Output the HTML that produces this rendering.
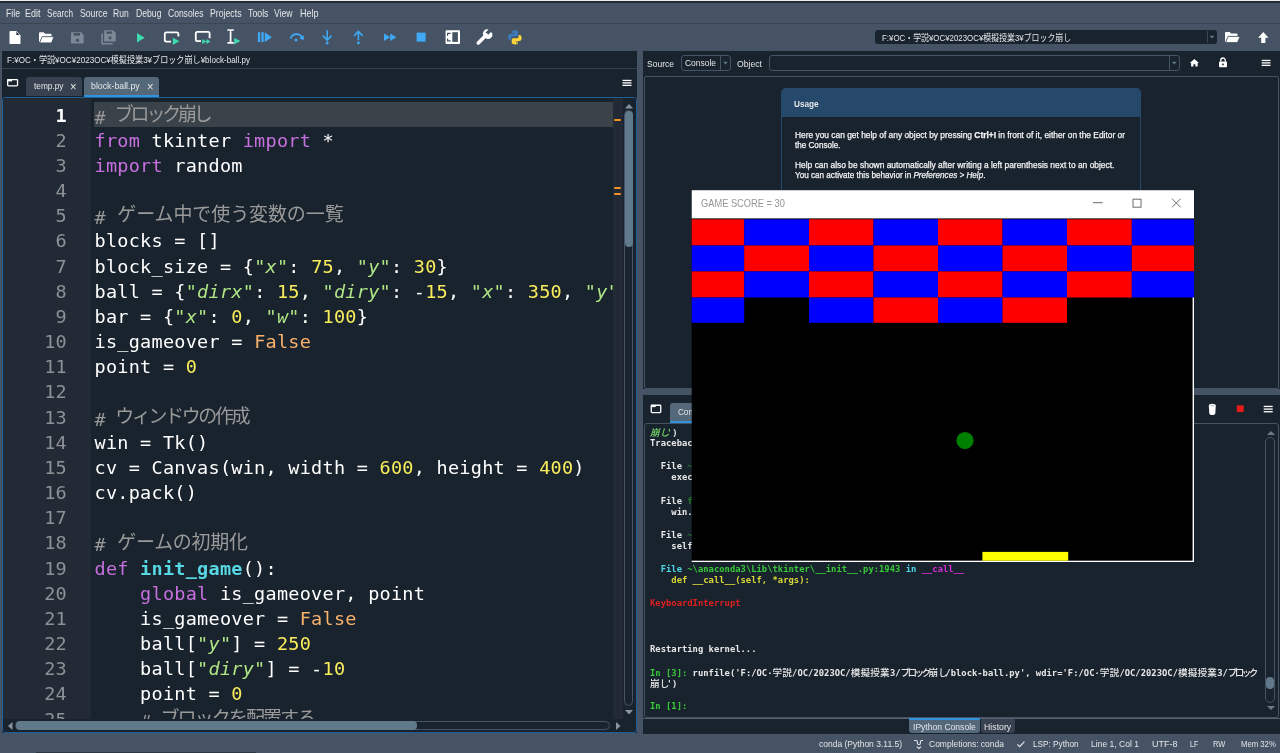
<!DOCTYPE html>
<html lang="ja">
<head>
<meta charset="utf-8">
<title>Spyder</title>
<style>
*{box-sizing:border-box;margin:0;padding:0}
html,body{width:1280px;height:753px;overflow:hidden;background:#19232d}
body{will-change:transform;position:relative;font-family:"Liberation Sans","Noto Sans CJK JP",sans-serif;color:#e0e1e3;font-size:10px}
.abs{position:absolute}
.ui{position:absolute;white-space:nowrap;transform-origin:0 50%;color:#e4e6e8}
/* ---------- top chrome ---------- */
#topline{left:0;top:0;width:1280px;height:2.5px;background:#222b37;border-top:1px solid #e9ebed}
#menubar{left:0;top:2.5px;width:1280px;height:20.5px;background:#455364}
#menusep{left:0;top:23px;width:1280px;height:1px;background:#3a4654}
#toolbar{left:0;top:24px;width:1280px;height:27px;background:#455364}
svg{position:absolute;overflow:visible}
/* ---------- left pane ---------- */
#leftedge{left:0;top:51px;width:2px;height:702px;background:#455364}
#pathbar{left:2px;top:51px;width:635px;height:17px;background:#19232d}
#pathsep{left:2px;top:68px;width:635px;height:1px;background:#36414e}
#tabbar{left:2px;top:69px;width:635px;height:28px;background:#19232d}
.tab{position:absolute;border-radius:3px 3px 0 0}
#editor{left:2px;top:97px;width:635px;height:636px;border:1px solid #1d5f98;border-radius:3px;background:#19232d;overflow:hidden}
#gutter{left:0;top:0;width:88px;height:622px;background:#222b35}
#flagcol{left:609.5px;top:0;width:10px;height:621px;background:#222b35}
#curline{left:2.5px;top:4px;width:520px;height:25px;background:#3a424a}
.ln{position:absolute;left:0;width:64px;text-align:right;color:#8e9297;letter-spacing:.263px;font:18.5px/25.15px "DejaVu Sans Mono","Liberation Mono","Noto Sans CJK JP",monospace;height:25.15px;white-space:pre}
.cl{position:absolute;left:3.5px;color:#fff;letter-spacing:.263px;font:18.5px/25.15px "DejaVu Sans Mono","Liberation Mono","Noto Sans CJK JP",monospace;height:25.15px;white-space:pre}
.c{color:#9a9a9a}.k{color:#c670e0}.s{color:#b0e686;font-style:italic}.n{color:#faed5c}.b{color:#fab16c}.d{color:#57d6e4;font-weight:bold}
.j{font-family:"Noto Sans CJK JP",sans-serif;font-size:19px;position:relative;top:-2.7px}
#code{left:88px;top:0;width:522px;height:621px;overflow:hidden}
#flagcol i{position:absolute;left:1px;width:7px;height:2px;background:#f39422;border-radius:1px}
#vsb{left:620px;top:0;width:13px;height:621px;background:#19232d}
#hsb{left:0;top:621px;width:633px;height:12px;background:#19232d}
#vsb b,#hsb b{background:#60798b;border-radius:4px}
#vsb u,#hsb u{border:1px solid #455364;border-radius:5px}
/* ---------- splitters ---------- */
#vsplit{left:637px;top:51px;width:6px;height:683px;background:#455364}
#hsplit{left:643px;top:389px;width:637px;height:6px;background:#455364}
/* ---------- help pane ---------- */
#helpbar{left:643px;top:51px;width:637px;height:25px;background:#19232d}
.combo{position:absolute;border:1px solid #455364;border-radius:3px;background:#19232d}
#helpview{left:644px;top:76px;width:635px;height:313px;border:1px solid #455364;border-radius:2px;background:#19232d}
#usage{left:781px;top:88px;width:360px;height:200px;border:1px solid #26486b;border-radius:4px;background:#19232d;overflow:hidden}
#usagehd{left:0;top:0;width:360px;height:28px;background:#26486b}
.ht{position:absolute;left:12px;white-space:nowrap;font-size:8.3px;color:#f4f5f6;transform-origin:0 50%;-webkit-text-stroke:.25px #f4f5f6}
/* ---------- console pane ---------- */
#conbar{left:643px;top:395px;width:637px;height:28px;background:#19232d}
#conview{left:644px;top:423px;width:635px;height:294.6px;border:1px solid #455364;border-radius:3px;background:#19232d;overflow:hidden}
.co{position:absolute;left:5px;white-space:pre;letter-spacing:.03px;font:bold 8.8px/11.4px "DejaVu Sans Mono","Liberation Mono","Noto Sans CJK JP",monospace;color:#e8e8e8;height:11.4px}
.kj,.kn{font-family:"Noto Sans CJK JP",sans-serif;font-size:9.6px;font-weight:500}.kj{letter-spacing:.2px}.kn{letter-spacing:-2.6px}
.cg{color:#38c838}.cd{color:#237a2c}.cc{color:#4fd8e8}.cm{color:#d42fd4}.cy{color:#d8d838}.cr{color:#e01f1f}.cgi{color:#74d36a;font-style:italic}
#bottabs{left:643px;top:719px;width:637px;height:15px;background:#19232d}
/* ---------- status bar ---------- */
#status{left:0;top:734px;width:1280px;height:19px;background:#455364}
#leftbot{left:0;top:733px;width:643px;height:1px;background:#455364}
/* ---------- game window ---------- */
#game{left:691px;top:190px;width:503px;height:372px;overflow:hidden}
</style>
</head>
<body>
<div id="topline" class="abs"></div>
<div id="menubar" class="abs"></div>
<div id="menusep" class="abs"></div>
<div id="toolbar" class="abs"></div>
<div id="leftedge" class="abs"></div>
<div id="pathbar" class="abs"></div>
<div id="pathsep" class="abs"></div>
<div id="tabbar" class="abs"></div>
<div id="editor" class="abs">
<div id="gutter" class="abs">
<div class="ln" style="top:4.50px;color:#fff;font-weight:bold">1</div>
<div class="ln" style="top:29.67px">2</div>
<div class="ln" style="top:54.84px">3</div>
<div class="ln" style="top:80.01px">4</div>
<div class="ln" style="top:105.18px">5</div>
<div class="ln" style="top:130.35px">6</div>
<div class="ln" style="top:155.52px">7</div>
<div class="ln" style="top:180.69px">8</div>
<div class="ln" style="top:205.86px">9</div>
<div class="ln" style="top:231.03px">10</div>
<div class="ln" style="top:256.20px">11</div>
<div class="ln" style="top:281.37px">12</div>
<div class="ln" style="top:306.54px">13</div>
<div class="ln" style="top:331.71px">14</div>
<div class="ln" style="top:356.88px">15</div>
<div class="ln" style="top:382.05px">16</div>
<div class="ln" style="top:407.22px">17</div>
<div class="ln" style="top:432.39px">18</div>
<div class="ln" style="top:457.56px">19</div>
<div class="ln" style="top:482.73px">20</div>
<div class="ln" style="top:507.90px">21</div>
<div class="ln" style="top:533.07px">22</div>
<div class="ln" style="top:558.24px">23</div>
<div class="ln" style="top:583.41px">24</div>
<div class="ln" style="top:608.58px">25</div>
</div>
<div id="code" class="abs">
<div id="curline" class="abs"></div>
<div class="cl" style="top:4.50px"><span class="c"># <span class="j" style="letter-spacing:-3.2px;margin-left:-2.5px">ブロック崩し</span></span></div>
<div class="cl" style="top:29.67px"><span class="k">from</span> tkinter <span class="k">import</span> *</div>
<div class="cl" style="top:54.84px"><span class="k">import</span> random</div>
<div class="cl" style="top:80.01px"></div>
<div class="cl" style="top:105.18px"><span class="c"># <span class="j" style="letter-spacing:-0.1px">ゲーム中で使う変数の一覧</span></span></div>
<div class="cl" style="top:130.35px">blocks = []</div>
<div class="cl" style="top:155.52px">block_size = {<span class="s">"x"</span>: <span class="n">75</span>, <span class="s">"y"</span>: <span class="n">30</span>}</div>
<div class="cl" style="top:180.69px">ball = {<span class="s">"dirx"</span>: <span class="n">15</span>, <span class="s">"diry"</span>: -<span class="n">15</span>, <span class="s">"x"</span>: <span class="n">350</span>, <span class="s">"y"</span>: <span class="n">250</span>, <span class="s">"w"</span>: <span class="n">10</span>}</div>
<div class="cl" style="top:205.86px">bar = {<span class="s">"x"</span>: <span class="n">0</span>, <span class="s">"w"</span>: <span class="n">100</span>}</div>
<div class="cl" style="top:231.03px">is_gameover = <span class="b">False</span></div>
<div class="cl" style="top:256.20px">point = <span class="n">0</span></div>
<div class="cl" style="top:281.37px"></div>
<div class="cl" style="top:306.54px"><span class="c"># <span class="j" style="letter-spacing:-2.4px;margin-left:-2px">ウィンドウの作成</span></span></div>
<div class="cl" style="top:331.71px">win = Tk()</div>
<div class="cl" style="top:356.88px">cv = Canvas(win, width = <span class="n">600</span>, height = <span class="n">400</span>)</div>
<div class="cl" style="top:382.05px">cv.pack()</div>
<div class="cl" style="top:407.22px"></div>
<div class="cl" style="top:432.39px"><span class="c"># <span class="j" style="letter-spacing:-0.3px">ゲームの初期化</span></span></div>
<div class="cl" style="top:457.56px"><span class="k">def</span> <span class="d">init_game</span>():</div>
<div class="cl" style="top:482.73px">    <span class="k">global</span> is_gameover, point</div>
<div class="cl" style="top:507.90px">    is_gameover = <span class="b">False</span></div>
<div class="cl" style="top:533.07px">    ball[<span class="s">"y"</span>] = <span class="n">250</span></div>
<div class="cl" style="top:558.24px">    ball[<span class="s">"diry"</span>] = -<span class="n">10</span></div>
<div class="cl" style="top:583.41px">    point = <span class="n">0</span></div>
<div class="cl" style="top:608.58px">    <span class="c"># <span class="j" style="letter-spacing:-1.9px;margin-left:-2.5px">ブロックを配置する</span></span></div>
</div>
<div id="flagcol" class="abs"><i style="top:21px"></i><i style="top:89px"></i><i style="top:95px"></i></div>
<div id="vsb" class="abs"><svg width="8" height="4.5" style="left:2px;top:6px" viewBox="0 0 8 4.5"><path d="M0 4.5L4 0L8 4.5Z" fill="#8794a1"/></svg><u class="abs" style="left:.8px;top:12px;width:9.5px;height:596px"></u><b class="abs" style="left:1.5px;top:12.5px;width:8.5px;height:136px"></b><svg width="8" height="4.5" style="left:2px;top:611.5px" viewBox="0 0 8 4.5"><path d="M0 0L4 4.5L8 0Z" fill="#8794a1"/></svg></div>
<div id="hsb" class="abs"><svg width="4.5" height="8" style="left:5px;top:2.5px" viewBox="0 0 4.5 8"><path d="M4.5 0L0 4L4.5 8Z" fill="#8794a1"/></svg><u class="abs" style="left:11.5px;top:1.800px;width:595px;height:9.5px"></u><b class="abs" style="left:13px;top:2.300px;width:401px;height:8.5px"></b><svg width="4.5" height="8" style="left:612.5px;top:2.5px" viewBox="0 0 4.5 8"><path d="M0 0L4.5 4L0 8Z" fill="#8794a1"/></svg></div>
</div>
<div id="leftbot" class="abs"></div>
<div class="abs" style="left:36px;top:752px;width:220px;height:1px;background:#2c3643;z-index:3"></div>
<div id="vsplit" class="abs"></div>
<div id="helpbar" class="abs"></div>
<div id="helpview" class="abs"></div>
<div id="usage" class="abs"><div id="usagehd" class="abs"></div>
<span class="ht" style="left:12.5px;top:40.5px;font-size:8.6px;line-height:11px;transform:scaleX(0.975)">Here you can get help of any object by pressing <b>Ctrl+I</b> in front of it, either on the Editor or</span>
<span class="ht" style="left:12.5px;top:50.8px;font-size:8.6px;line-height:11px;transform:scaleX(0.943)">the Console.</span>
<span class="ht" style="left:12.5px;top:71.3px;font-size:8.6px;line-height:11px;transform:scaleX(0.979)">Help can also be shown automatically after writing a left parenthesis next to an object.</span>
<span class="ht" style="left:12.5px;top:80.9px;font-size:8.6px;line-height:11px;transform:scaleX(0.945)">You can activate this behavior in <i>Preferences &gt; Help</i>.</span>
</div>
<div id="hsplit" class="abs"></div>
<div id="conbar" class="abs"></div>
<div id="conview" class="abs">
<div class="co" style="top:2.7px"><span class="cgi"><span class="kj">崩</span><span class="kn">し</span>'</span>)</div>
<div class="co" style="top:14.1px">Traceback (most recent call last):</div>
<div class="co" style="top:37.0px">  File <span class="cd">~\anaconda3\Lib\site-packages\spyder_kernels\py3compat.py:356</span> in <span class="cd">compat_exec</span></div>
<div class="co" style="top:48.4px">    exec(code, globals, locals)</div>
<div class="co" style="top:71.2px">  File <span class="cd">f:\oc·<span class="kj">学説</span>\oc\2023oc\<span class="kj">模擬授業</span>3\<span class="kn">ブロック</span><span class="kj">崩</span><span class="kn">し</span>\block-ball.py:91</span></div>
<div class="co" style="top:82.6px">    win.mainloop()</div>
<div class="co" style="top:105.5px">  File <span class="cd">~\anaconda3\Lib\tkinter\__init__.py:1485</span> in <span class="cd">mainloop</span></div>
<div class="co" style="top:116.9px">    self.tk.mainloop(n)</div>
<div class="co" style="top:139.7px">  <span class="cc">File</span> <span class="cg">~\anaconda3\Lib\tkinter\__init__.py:1943</span> <span class="cc">in</span> <span class="cm">__call__</span></div>
<div class="co" style="top:151.2px"><span class="cy">    def __call__(self, *args):</span></div>
<div class="co" style="top:174.0px"><span class="cr">KeyboardInterrupt</span></div>
<div class="co" style="top:219.7px">Restarting kernel...</div>
<div class="co" style="top:242.5px"><span class="cg">In [3]:</span> runfile('F:/OC·<span class="kj">学説</span>/OC/2023OC/<span class="kj">模擬授業</span>3/<span class="kn">ブロック</span><span class="kj">崩</span><span class="kn">し</span>/block-ball.py', wdir='F:/OC·<span class="kj">学説</span>/OC/2023OC/<span class="kj">模擬授業</span>3/<span class="kn">ブロック</span></div>
<div class="co" style="top:253.9px"><span class="kj">崩</span><span class="kn">し</span>')</div>
<div class="co" style="top:276.8px"><span class="cg">In [1]:</span> </div>
<svg width="8" height="4" style="left:621.5px;top:7px" viewBox="0 0 8 4"><path d="M0 4L4 0L8 4Z" fill="#6d7b89"/></svg>
<div class="abs" style="left:620px;top:13px;width:10px;height:266px;border:1px solid #455364;border-radius:5px"></div>
<div class="abs" style="left:621px;top:253px;width:8px;height:12px;background:#60798b;border-radius:4px"></div>
<svg width="8" height="4" style="left:621.5px;top:282px" viewBox="0 0 8 4"><path d="M0 0L4 4L8 0Z" fill="#6d7b89"/></svg>
</div>
<div id="bottabs" class="abs"></div>
<div class="abs" style="left:643px;top:718px;width:637px;height:1px;background:#56616e"></div>
<div id="status" class="abs"></div>
<div class="abs" style="left:875px;top:30px;width:342px;height:14px;background:#19232d;border-radius:3px"></div>
<div class="abs" style="left:1207px;top:31px;width:1px;height:12px;background:#3a4654"></div>
<div class="tab" style="left:26px;top:77px;width:56px;height:19px;background:#37414f"></div>
<div class="tab" style="left:84px;top:77px;width:75px;height:20px;background:#54687a;border-bottom:2.5px solid #2f94dc"></div>
<div class="combo" style="left:681px;top:55px;width:50px;height:16px"></div>
<div class="abs" style="left:720px;top:56px;width:1px;height:14px;background:#455364"></div>
<div class="combo" style="left:769px;top:55px;width:411px;height:16px"></div>
<div class="abs" style="left:1169px;top:56px;width:1px;height:14px;background:#455364"></div>
<div class="tab" style="left:670px;top:403px;width:66px;height:20px;background:#54687a;border-bottom:2.5px solid #2f94dc"></div>
<div class="tab" style="left:909px;top:718px;width:71px;height:15px;background:#54687a;border-top:2px solid #2f94dc;border-radius:0 0 3px 3px"></div>
<div class="tab" style="left:981px;top:719px;width:34px;height:14px;background:#37414f;border-radius:0 0 3px 3px"></div>
<svg id="icons" width="1280" height="753" viewBox="0 0 1280 753" style="left:0;top:0">
<path d="M10.4 31h5.9l4.2 4.2v8a.9.9 0 0 1-.9.9h-9.2a.9.9 0 0 1-.9-.9v-11.300a.9.9 0 0 1 .9-.9z" fill="#fff"/><path d="M16.3 31.800v3.300h3.300z" fill="#2b3542"/>
<path d="M39.0 33.3a1 1 0 0 1 1-1h3.6l1.5 1.5h5.4a1 1 0 0 1 1 1v6.5a1 1 0 0 1-1 1h-10.5a1 1 0 0 1-1-1z" fill="#fff"/><path d="M42.1 36.7h12l-2.6 6.2h-12z" fill="#fff" stroke="#455364" stroke-width=".9" stroke-linejoin="round"/>
<path d="M71.8 32.200h9.200l2.7 2.700v7.900a.8.8 0 0 1-.8.8h-11.100a.8.8 0 0 1-.8-.8v-9.800a.8.8 0 0 1 .8-.8z" fill="#7d8996"/><rect x="73.6" y="33" width="6.4" height="2.6" fill="#455364"/><circle cx="77.5" cy="40.2" r="1.7" fill="#455364"/>
<path d="M104.9 30.200h8.200l2.7 2.700v8a.7.7 0 0 1-.7.700h-10.200a.7.7 0 0 1-.7-.7v-10a.7.7 0 0 1 .7-.7z" fill="#7d8996"/><rect x="106.5" y="31.5" width="5.6" height="2.3" fill="#455364"/><circle cx="110" cy="37.8" r="1.6" fill="#455364"/><path d="M101.3 33.500h1.600v9.600h9.800v1.500h-10.600a.8.8 0 0 1-.8-.8z" fill="#7d8996"/>
<path d="M137 33l7.7 4.800-7.7 4.800z" fill="#3fd9ac"/>
<path d="M171 41.600h-4.600a1.6 1.6 0 0 1-1.600-1.600v-6a1.6 1.6 0 0 1 1.600-1.600h10.400a1.6 1.6 0 0 1 1.6 1.600v2.6" fill="none" stroke="#fff" stroke-width="1.8"/><path d="M172.8 37.600l6.6 3.600-6.6 3.700z" fill="#3fd9ac"/>
<path d="M201 41.100h-3.600a1.6 1.6 0 0 1-1.600-1.600v-6a1.6 1.6 0 0 1 1.600-1.600h10.600a1.6 1.6 0 0 1 1.6 1.600v4.7" fill="none" stroke="#fff" stroke-width="1.8"/><path d="M202.2 39l4.2 2.500-4.2 2.600zM206.4 39l4.2 2.500-4.2 2.600z" fill="#3fd9ac"/>
<path d="M227.4 30h2.200l1 .6 1-.6h2.200M227.4 42.800h2.200l1-.6 1 .6h2.200M230.6 30.500v11.8" fill="none" stroke="#fff" stroke-width="1.7"/><path d="M234.2 37.700l6.2 3.300-6.2 3.400z" fill="#3fd9ac"/>
<path d="M257.9 32.300h2.300v9.700h-2.300zM261.4 32.300h2.300v9.700h-2.300zM264.8 32.300l7.1 4.850-7.1 4.850z" fill="#3fa9f5"/>
<path d="M290.5 38.800a6.3 6.3 0 0 1 11.600-1.4" fill="none" stroke="#3fa9f5" stroke-width="1.7"/><path d="M304 35.300l-.3 4.600-4.400-1.300z" fill="#3fa9f5"/><circle cx="296" cy="40" r="1.5" fill="#3fa9f5"/>
<path d="M327.2 30.300v9.500M322.9 35.600l4.3 4.6 4.300-4.6" fill="none" stroke="#3fa9f5" stroke-width="1.6"/><circle cx="327.2" cy="43" r="1.4" fill="#3fa9f5"/>
<path d="M358.4 40.300v-8.600M354.1 35.900l4.300-4.6 4.3 4.6" fill="none" stroke="#3fa9f5" stroke-width="1.6"/><circle cx="358.4" cy="43" r="1.4" fill="#3fa9f5"/>
<path d="M384 33.400l6.2 3.750-6.2 3.750zM390.2 33.400l6.2 3.750-6.2 3.750z" fill="#3fa9f5"/>
<rect x="416.6" y="32.6" width="9" height="9" fill="#3fa9f5"/>
<rect x="445.6" y="30.3" width="14.4" height="13.8" rx="1.2" fill="#fff"/><rect x="452.3" y="32.2" width="5.6" height="9.7" fill="#455364"/><path d="M450.7 33.3h-3.100v2.500M450.7 40.900h-3.100v-2.500" fill="none" stroke="#455364" stroke-width="1.200"/>
<path d="M478.3 42.900l8-8" stroke="#fff" stroke-width="3.6" stroke-linecap="round" fill="none"/><path d="M490.9 31.400l-2.9 2.900-1.900-.5-.5-1.9 2.900-2.900a4.3 4.3 0 0 0-5.3 5.700l1.9 1.9 1.5 1.500a4.3 4.3 0 0 0 5.700-5.300z" fill="#fff" transform="translate(0 .6)"/>
<g transform="translate(507.3 29.900) scale(.94)"><path d="M7.900.5c-3.2 0-3 1.400-3 1.400v1.900h3.100v.5H3.100S.8 4 .8 7.400s2 3.3 2 3.300h1.200V9.100s-.1-2 2-2h3.400s1.9 0 1.900-1.900V2.400S11.600.5 7.900.5zM6.2 1.600a.6.6 0 1 1 0 1.200.6.6 0 0 1 0-1.200z" fill="#3b7bbd"/><path d="M8.1 15.500c3.2 0 3-1.4 3-1.400v-1.900H8v-.5h4.900s2.300.3 2.300-3.100-2-3.300-2-3.300H12v1.600s.1 2-2 2H6.600s-1.9 0-1.9 1.900v3s-.3 1.7 3.4 1.700zm1.700-1.100a.6.6 0 1 1 0-1.200.6.6 0 0 1 0 1.200z" fill="#ffd43b"/></g>
<path d="M1209.6 35.800h4.800l-2.4 2.800z" fill="#60798b"/>
<path d="M1225.0 33.0a1 1 0 0 1 1-1h3.6l1.5 1.5h5.4a1 1 0 0 1 1 1v6.5a1 1 0 0 1-1 1h-10.5a1 1 0 0 1-1-1z" fill="#fff"/><path d="M1228.1 36.4h12l-2.6 6.2h-12z" fill="#fff" stroke="#455364" stroke-width=".9" stroke-linejoin="round"/>
<path d="M1263.3 32.100l5.2 5.600h-3.100v5.300h-4.200v-5.300h-3.100z" fill="#fff"/>
<path d="M8.45 79.55h8.30a0.8 0.8 0 0 1 0.8 0.8v4.70a0.8 0.8 0 0 1-0.8 0.8h-8.30a0.8 0.8 0 0 1-0.8-0.8v-4.70a0.8 0.8 0 0 1 0.8-0.8z" fill="none" stroke="#fff" stroke-width="1.3"/><path d="M7.30 79.20h4.800v2.200h-4.800z" fill="#fff"/>
<rect x="622.5" y="79.80" width="9.0" height="1.3" fill="#fff"/><rect x="622.5" y="82.25" width="9.0" height="1.3" fill="#fff"/><rect x="622.5" y="84.70" width="9.0" height="1.3" fill="#fff"/>
<path d="M723.2 61.800h4.600l-2.3 2.700z" fill="#60798b"/><path d="M1172 61.800h4.600l-2.3 2.700z" fill="#60798b"/>
<path d="M1194.4 58.900l4.6 4.100h-1.300v3.500h-2.300v-2.300h-2v2.300h-2.300v-3.500h-1.300z" fill="#fff"/>
<path d="M1220.8 61.500v-1.300a2.2 2.2 0 0 1 4.4 0v1.3" fill="none" stroke="#fff" stroke-width="1.3"/><rect x="1219" y="61.4" width="8" height="5.9" rx=".8" fill="#fff"/><rect x="1222.2" y="63.6" width="1.6" height="1.6" fill="#19232d"/>
<rect x="1261.7" y="59.80" width="8.8" height="1.3" fill="#fff"/><rect x="1261.7" y="62.25" width="8.8" height="1.3" fill="#fff"/><rect x="1261.7" y="64.70" width="8.8" height="1.3" fill="#fff"/>
<path d="M652.05 405.25h7.90a0.8 0.8 0 0 1 0.8 0.8v5.70a0.8 0.8 0 0 1-0.8 0.8h-7.90a0.8 0.8 0 0 1-0.8-0.8v-5.70a0.8 0.8 0 0 1 0.8-0.8z" fill="none" stroke="#fff" stroke-width="1.3"/><path d="M650.90 404.90h4.800v2.200h-4.800z" fill="#fff"/>
<path d="M1208.8 405.600c0-1.1 1.500-1.8 3.500-1.800s3.500.7 3.5 1.800l-.5 7.800c0 .9-1.3 1.500-3 1.500s-3-.6-3-1.500z" fill="#fff"/><ellipse cx="1212.3" cy="405.6" rx="2.6" ry=".9" fill="#c9ced3"/>
<rect x="1236.8" y="405.3" width="6.9" height="6.8" fill="#e31b1b"/>
<rect x="1263.7" y="405.80" width="9.0" height="1.3" fill="#fff"/><rect x="1263.7" y="408.45" width="9.0" height="1.3" fill="#fff"/><rect x="1263.7" y="411.10" width="9.0" height="1.3" fill="#fff"/>
<path d="M914 740.500h2.200a1.2 1.2 0 0 1 1.2 1.200v1.600a1.2 1.2 0 0 0 1.2 1.200h.6a1.2 1.2 0 0 0 1.200-1.200v-1.600a1.2 1.2 0 0 1 1.200-1.200h1.4" fill="none" stroke="#e4e6e8" stroke-width="1.1"/><path d="M916.7 746.600l2.2 1.9 2.200-1.9" fill="none" stroke="#e4e6e8" stroke-width="1.1"/>
<path d="M1017.4 744.4l2.300 2.300 4.700-5.100" fill="none" stroke="#e4e6e8" stroke-width="1.2"/>
</svg>
<span class="ui" style="left:5.5px;top:6.6px;font-size:10.2px;line-height:14.3px;transform:scaleX(0.853)">File</span>
<span class="ui" style="left:25.0px;top:6.6px;font-size:10.2px;line-height:14.3px;transform:scaleX(0.883)">Edit</span>
<span class="ui" style="left:47.0px;top:6.6px;font-size:10.2px;line-height:14.3px;transform:scaleX(0.805)">Search</span>
<span class="ui" style="left:79.5px;top:6.6px;font-size:10.2px;line-height:14.3px;transform:scaleX(0.852)">Source</span>
<span class="ui" style="left:113.0px;top:6.6px;font-size:10.2px;line-height:14.3px;transform:scaleX(0.842)">Run</span>
<span class="ui" style="left:135.5px;top:6.6px;font-size:10.2px;line-height:14.3px;transform:scaleX(0.849)">Debug</span>
<span class="ui" style="left:167.5px;top:6.6px;font-size:10.2px;line-height:14.3px;transform:scaleX(0.836)">Consoles</span>
<span class="ui" style="left:209.5px;top:6.6px;font-size:10.2px;line-height:14.3px;transform:scaleX(0.856)">Projects</span>
<span class="ui" style="left:247.5px;top:6.6px;font-size:10.2px;line-height:14.3px;transform:scaleX(0.862)">Tools</span>
<span class="ui" style="left:274.0px;top:6.6px;font-size:10.2px;line-height:14.3px;transform:scaleX(0.845)">View</span>
<span class="ui" style="left:299.5px;top:6.6px;font-size:10.2px;line-height:14.3px;transform:scaleX(0.883)">Help</span>
<span class="ui" style="left:7.0px;top:53.4px;font-size:9.5px;line-height:13.3px;transform:scaleX(0.851)">F:¥OC・学説¥OC¥2023OC¥模擬授業3¥ブロック崩し¥block-ball.py</span>
<span class="ui" style="left:33.8px;top:78.9px;font-size:9.5px;line-height:13.3px;transform:scaleX(0.873)">temp.py</span>
<span class="ui" style="left:69.5px;top:79.3px;font-size:13px;line-height:15.4px;transform:scaleX(0.86)">×</span>
<span class="ui" style="left:91.2px;top:78.9px;font-size:9.5px;line-height:13.3px;transform:scaleX(0.923)">block-ball.py</span>
<span class="ui" style="left:146.5px;top:79.3px;font-size:13px;line-height:15.4px;transform:scaleX(0.86)">×</span>
<span class="ui" style="left:882.0px;top:30.8px;font-size:9.5px;line-height:13.3px;transform:scaleX(0.831)">F:¥OC・学説¥OC¥2023OC¥模擬授業3¥ブロック崩し</span>
<span class="ui" style="left:647.0px;top:56.9px;font-size:9.8px;line-height:13.7px;transform:scaleX(0.870)">Source</span>
<span class="ui" style="left:684.5px;top:55.9px;font-size:9.8px;line-height:13.7px;transform:scaleX(0.862)">Console</span>
<span class="ui" style="left:737.0px;top:56.9px;font-size:9.8px;line-height:13.7px;transform:scaleX(0.883)">Object</span>
<span class="ui" style="left:794.4px;top:96.9px;font-size:9.6px;line-height:13.4px;transform:scaleX(0.854);font-weight:bold">Usage</span>
<span class="ui" style="left:677.8px;top:405.1px;font-size:9.8px;line-height:13.7px;transform:scaleX(0.829)">Console 1/A</span>
<span class="ui" style="left:912.5px;top:719.6px;font-size:9.8px;line-height:13.7px;transform:scaleX(0.874)">IPython Console</span>
<span class="ui" style="left:983.8px;top:719.6px;font-size:9.8px;line-height:13.7px;transform:scaleX(0.894)">History</span>
<span class="ui" style="left:818.8px;top:737.1px;font-size:9.8px;line-height:13.7px;transform:scaleX(0.868)">conda (Python 3.11.5)</span>
<span class="ui" style="left:929.0px;top:737.1px;font-size:9.8px;line-height:13.7px;transform:scaleX(0.866)">Completions: conda</span>
<span class="ui" style="left:1032.5px;top:737.1px;font-size:9.8px;line-height:13.7px;transform:scaleX(0.839)">LSP: Python</span>
<span class="ui" style="left:1091.3px;top:737.1px;font-size:9.8px;line-height:13.7px;transform:scaleX(0.872)">Line 1, Col 1</span>
<span class="ui" style="left:1151.7px;top:737.1px;font-size:9.8px;line-height:13.7px;transform:scaleX(0.918)">UTF-8</span>
<span class="ui" style="left:1190.0px;top:737.1px;font-size:9.8px;line-height:13.7px;transform:scaleX(0.717)">LF</span>
<span class="ui" style="left:1212.5px;top:737.1px;font-size:9.8px;line-height:13.7px;transform:scaleX(0.761)">RW</span>
<span class="ui" style="left:1240.6px;top:737.1px;font-size:9.8px;line-height:13.7px;transform:scaleX(0.789)">Mem 32%</span>
<div id="game" class="abs">
<svg width="503" height="372" viewBox="0 0 503 372" style="left:0;top:0">
<rect x="0.7" y="0" width="502.3" height="372" fill="#000"/>
<rect x="0.7" y="0.2" width="502.3" height="28.200" fill="#fff"/>
<rect x="0.7" y="29.3" width="52.5" height="26.2" fill="#fe0000"/>
<rect x="53.2" y="29.3" width="64.8" height="26.2" fill="#0000fe"/>
<rect x="118.0" y="29.3" width="64.5" height="26.2" fill="#fe0000"/>
<rect x="182.5" y="29.3" width="64.5" height="26.2" fill="#0000fe"/>
<rect x="247.0" y="29.3" width="64.5" height="26.2" fill="#fe0000"/>
<rect x="311.5" y="29.3" width="64.5" height="26.2" fill="#0000fe"/>
<rect x="376.0" y="29.3" width="64.8" height="26.2" fill="#fe0000"/>
<rect x="440.8" y="29.3" width="62.2" height="26.2" fill="#0000fe"/>
<rect x="0.7" y="55.5" width="52.5" height="25.9" fill="#0000fe"/>
<rect x="53.2" y="55.5" width="64.8" height="25.9" fill="#fe0000"/>
<rect x="118.0" y="55.5" width="64.5" height="25.9" fill="#0000fe"/>
<rect x="182.5" y="55.5" width="64.5" height="25.9" fill="#fe0000"/>
<rect x="247.0" y="55.5" width="64.5" height="25.9" fill="#0000fe"/>
<rect x="311.5" y="55.5" width="64.5" height="25.9" fill="#fe0000"/>
<rect x="376.0" y="55.5" width="64.8" height="25.9" fill="#0000fe"/>
<rect x="440.8" y="55.5" width="62.2" height="25.9" fill="#fe0000"/>
<rect x="0.7" y="81.4" width="52.5" height="26.1" fill="#fe0000"/>
<rect x="53.2" y="81.4" width="64.8" height="26.1" fill="#0000fe"/>
<rect x="118.0" y="81.4" width="64.5" height="26.1" fill="#fe0000"/>
<rect x="182.5" y="81.4" width="64.5" height="26.1" fill="#0000fe"/>
<rect x="247.0" y="81.4" width="64.5" height="26.1" fill="#fe0000"/>
<rect x="311.5" y="81.4" width="64.5" height="26.1" fill="#0000fe"/>
<rect x="376.0" y="81.4" width="64.8" height="26.1" fill="#fe0000"/>
<rect x="440.8" y="81.4" width="62.2" height="26.1" fill="#0000fe"/>
<rect x="0.7" y="107.5" width="52.5" height="25.3" fill="#0000fe"/>
<rect x="118.0" y="107.5" width="64.5" height="25.3" fill="#0000fe"/>
<rect x="182.5" y="107.5" width="64.5" height="25.3" fill="#fe0000"/>
<rect x="247.0" y="107.5" width="64.5" height="25.3" fill="#0000fe"/>
<rect x="311.5" y="107.5" width="64.5" height="25.3" fill="#fe0000"/>
<rect x="501.6" y="107.5" width="1.6" height="264.5" fill="#fff"/>
<rect x="0.7" y="370.7" width="502.3" height="1.5" fill="#fff"/>
<circle cx="274" cy="250.5" r="8.6" fill="#008000"/>
<rect x="291.4" y="361.9" width="85.8" height="8.8" fill="#ffff00"/>
<path d="M402 12.700h9.7" stroke="#6b6b6b" stroke-width="1"/><rect x="442" y="9.2" width="8" height="8" fill="none" stroke="#6b6b6b" stroke-width="1"/><path d="M481 8.700l8.600 8.600M489.600 8.700l-8.600 8.6" stroke="#6b6b6b" stroke-width="1" fill="none"/>
</svg>
<span class="ui" style="left:10.3px;top:5.7px;font-size:10.8px;line-height:15.1px;transform:scaleX(0.860);color:#959595">GAME SCORE = 30</span>
</div>
</body>
</html>
